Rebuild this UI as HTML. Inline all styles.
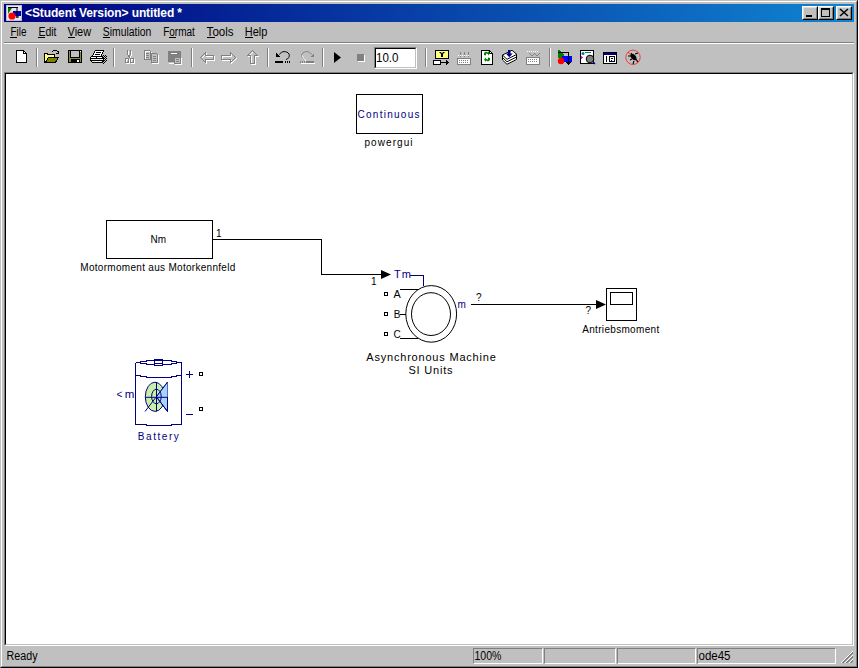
<!DOCTYPE html>
<html><head><meta charset="utf-8">
<style>
html,body{margin:0;padding:0;background:#fff;width:859px;height:668px;overflow:hidden}
*{box-sizing:border-box}
.a{position:absolute}
#win{position:absolute;left:0;top:0;width:858px;height:668px;background:#c0c0c0;
 border-top:1px solid #c0c0c0;border-left:1px solid #c0c0c0;border-right:1px solid #000;border-bottom:1px solid #000}
#win2{position:absolute;left:1px;top:1px;width:856px;height:666px;border-top:1px solid #fff;border-left:1px solid #fff;border-right:1px solid #808080;border-bottom:1px solid #808080}
#title{position:absolute;left:4px;top:4px;width:850px;height:18px;background:linear-gradient(to right,#000080,#1084d0)}
.cbtn{position:absolute;top:6px;width:16px;height:14px;background:#c0c0c0;border-top:1px solid #fff;border-left:1px solid #fff;border-right:1px solid #000;border-bottom:1px solid #000}
.cbtn i{position:absolute;left:0;top:0;width:14px;height:12px;border-right:1px solid #808080;border-bottom:1px solid #808080;border-top:1px solid #dfdfdf;border-left:1px solid #dfdfdf}
.sep{position:absolute;top:48px;width:2px;height:19px;border-left:1px solid #808080;border-right:1px solid #fff}
#canvas{position:absolute;left:4px;top:72px;width:850px;height:574px;border-top:1px solid #808080;border-left:1px solid #808080;border-right:1px solid #fff;border-bottom:1px solid #fff}
#canvas2{position:absolute;left:0;top:0;width:848px;height:572px;background:#fff;border-top:1px solid #000;border-left:1px solid #000;border-right:1px solid #c0c0c0;border-bottom:1px solid #c0c0c0}
.pane{position:absolute;top:648px;height:16px;border-top:1px solid #808080;border-left:1px solid #808080;border-right:1px solid #fff;border-bottom:1px solid #fff}
svg{position:absolute;left:0;top:0}
text{font-family:"Liberation Sans",sans-serif}
</style></head><body>
<div id="win"></div>
<div id="win2"></div>
<div id="title"></div>
<div class="cbtn" style="left:802px"><i></i></div>
<div class="cbtn" style="left:818px"><i></i></div>
<div class="cbtn" style="left:836px"><i></i></div>
<div class="a" style="left:806px;top:15px;width:6px;height:2px;background:#000"></div>
<div class="a" style="left:821px;top:8px;width:9px;height:9px;border:1px solid #000;border-top-width:2px"></div>
<div class="a" style="left:4px;top:42px;width:850px;height:1px;background:#808080"></div>
<div class="a" style="left:4px;top:43px;width:850px;height:1px;background:#fff"></div>
<div class="sep" style="left:36px"></div>
<div class="sep" style="left:113px"></div>
<div class="sep" style="left:191px"></div>
<div class="sep" style="left:267px"></div>
<div class="sep" style="left:322px"></div>
<div class="sep" style="left:425px"></div>
<div class="sep" style="left:549px"></div>
<div class="a" style="left:374px;top:47px;width:43px;height:22px;border-top:1px solid #808080;border-left:1px solid #808080;border-right:1px solid #fff;border-bottom:1px solid #fff">
 <div class="a" style="left:0;top:0;width:41px;height:20px;background:#fff;border-top:1px solid #000;border-left:1px solid #000;border-right:1px solid #c0c0c0;border-bottom:1px solid #c0c0c0"></div>
</div>
<div id="canvas"><div id="canvas2"></div></div>
<div class="pane" style="left:473px;width:70px"></div>
<div class="pane" style="left:544px;width:72px"></div>
<div class="pane" style="left:617px;width:79px"></div>
<div class="pane" style="left:697px;width:139px"></div>

<!-- UI text + icons -->
<svg id="ui" width="859" height="668">
 <!-- title -->
 <g>
  <rect x="6" y="5" width="16" height="16" fill="#c0c0c0"/>
  <rect x="7" y="6" width="14" height="14" fill="#e8e8f0"/>
  <path d="M8 7h10v1H8z" fill="#000"/>
  <path d="M8 8h4l-4 6z" fill="#008000"/>
  <rect x="13" y="11" width="8" height="5" fill="#0000c0"/>
  <circle cx="12" cy="16" r="3.6" fill="#ff0000"/>
  <path d="M17 8v10M16 17h3" stroke="#000" stroke-width="1" fill="none"/>
 </g>
 <text x="25" y="17" font-size="12" font-weight="bold" fill="#fff" textLength="157" lengthAdjust="spacing">&lt;Student Version&gt; untitled *</text>
 <path d="M840 9 L848 16 M848 9 L840 16" stroke="#000" stroke-width="1.5" fill="none"/>
 <!-- menu -->
 <g font-size="12" fill="#000">
  <text x="10.5" y="35.5" textLength="16" lengthAdjust="spacingAndGlyphs">File</text>
  <text x="38.5" y="35.5" textLength="18" lengthAdjust="spacingAndGlyphs">Edit</text>
  <text x="67.6" y="35.5" textLength="23.5" lengthAdjust="spacingAndGlyphs">View</text>
  <text x="102.8" y="35.5" textLength="48.5" lengthAdjust="spacingAndGlyphs">Simulation</text>
  <text x="163.2" y="35.5" textLength="31.7" lengthAdjust="spacingAndGlyphs">Format</text>
  <text x="206.6" y="35.5" textLength="27" lengthAdjust="spacingAndGlyphs">Tools</text>
  <text x="244.8" y="35.5" textLength="22.5" lengthAdjust="spacingAndGlyphs">Help</text>
 </g>
 <g fill="#000">
  <rect x="10" y="37" width="7" height="1"/>
  <rect x="38" y="37" width="7" height="1"/>
  <rect x="68" y="37" width="7" height="1"/>
  <rect x="103" y="37" width="7" height="1"/>
  <rect x="169" y="37" width="7" height="1"/>
  <rect x="207" y="37" width="8" height="1"/>
  <rect x="245" y="37" width="8" height="1"/>
 </g>
 <!-- status text -->
 <g font-size="12" fill="#000">
  <text x="6.5" y="660" textLength="31" lengthAdjust="spacingAndGlyphs">Ready</text>
  <text x="474.5" y="660" textLength="27" lengthAdjust="spacingAndGlyphs">100%</text>
  <text x="698.5" y="660" textLength="32" lengthAdjust="spacingAndGlyphs">ode45</text>
  <text x="376" y="62" textLength="22.5" lengthAdjust="spacingAndGlyphs">10.0</text>
 </g>
 <!-- size grip -->
 <g stroke-width="1" fill="none" shape-rendering="crispEdges" transform="translate(-1,0)">
  <path d="M841.5 663.5 L853.5 651.5" stroke="#fff"/>
  <path d="M842.5 663.5 L853.5 652.5 M843.5 663.5 L853.5 653.5" stroke="#808080"/>
  <path d="M845.5 663.5 L853.5 655.5" stroke="#fff"/>
  <path d="M846.5 663.5 L853.5 656.5 M847.5 663.5 L853.5 657.5" stroke="#808080"/>
  <path d="M849.5 663.5 L853.5 659.5" stroke="#fff"/>
  <path d="M850.5 663.5 L853.5 660.5 M851.5 663.5 L853.5 661.5" stroke="#808080"/>
 </g>

 <!-- TOOLBAR ICONS -->
 <g shape-rendering="crispEdges">
  <!-- new -->
  <path d="M16.5 50.5H23.5L26.5 53.5V62.5H16.5Z" fill="#fff" stroke="#000"/>
  <path d="M23.5 50.5V53.5H26.5" fill="none" stroke="#000"/>
  <!-- open -->
  <path d="M44.5 53.5H47.5V54.5H54.5V57.5H58.5L55.5 62.5H44.5Z" fill="#ffff80" stroke="#000"/>
  <path d="M48.5 57.5H58.5L55.5 62.5H45.5Z" fill="#808000" stroke="#000"/>
  <path d="M52 51h1v1h-1zM53 50h4v1h-4zM57 51h1v1h-1zM58 51h1v3h-3v-1h2z" fill="#000"/>
  <!-- save -->
  <rect x="68.5" y="50.5" width="13" height="12" fill="#8a8a48" stroke="#000"/>
  <rect x="70.5" y="50.5" width="9" height="7" fill="#c0c0c0" stroke="#000"/>
  <rect x="71" y="59" width="9" height="4" fill="#000"/>
  <rect x="77" y="60" width="2" height="2" fill="#fff"/>
  <rect x="80" y="51" width="1" height="1" fill="#fff"/>
  <!-- print -->
  <g><rect x="95" y="51" width="8" height="1" fill="#fff"/><rect x="95" y="52" width="7" height="1" fill="#fff"/><rect x="94" y="53" width="8" height="1" fill="#fff"/><rect x="94" y="54" width="7" height="1" fill="#fff"/><rect x="93" y="55" width="8" height="1" fill="#fff"/><rect x="95" y="50" width="9" height="1" fill="#000"/><rect x="94" y="51" width="1" height="1" fill="#000"/><rect x="94" y="52" width="1" height="1" fill="#000"/><rect x="93" y="53" width="1" height="1" fill="#000"/><rect x="93" y="54" width="1" height="1" fill="#000"/><rect x="92" y="55" width="1" height="1" fill="#000"/><rect x="103" y="51" width="1" height="1" fill="#000"/><rect x="102" y="52" width="1" height="1" fill="#000"/><rect x="102" y="53" width="1" height="1" fill="#000"/><rect x="101" y="54" width="1" height="1" fill="#000"/><rect x="101" y="55" width="1" height="1" fill="#000"/><rect x="96" y="52" width="5" height="1" fill="#000"/><rect x="95" y="54" width="5" height="1" fill="#000"/><rect x="91" y="56" width="12" height="1" fill="#000"/><rect x="90" y="57" width="1" height="1" fill="#000"/><rect x="91" y="57" width="5" height="1" fill="#fff"/><rect x="96" y="57" width="1" height="1" fill="#000"/><rect x="97" y="57" width="5" height="1" fill="#fff"/><rect x="102" y="57" width="1" height="1" fill="#000"/><rect x="90" y="58" width="14" height="1" fill="#000"/><rect x="90" y="59" width="1" height="1" fill="#000"/><rect x="91" y="59" width="12" height="1" fill="#f0f0e0"/><rect x="103" y="59" width="1" height="1" fill="#000"/><rect x="90" y="60" width="14" height="1" fill="#000"/><rect x="91" y="61" width="1" height="1" fill="#000"/><rect x="92" y="61" width="10" height="1" fill="#f0f0e0"/><rect x="102" y="61" width="1" height="1" fill="#000"/><rect x="92" y="62" width="11" height="1" fill="#000"/><rect x="103" y="55" width="1" height="1" fill="#000"/><rect x="105" y="55" width="1" height="1" fill="#000"/><rect x="104" y="56" width="1" height="1" fill="#000"/><rect x="106" y="56" width="1" height="1" fill="#000"/><rect x="103" y="57" width="1" height="1" fill="#000"/><rect x="105" y="57" width="1" height="1" fill="#000"/><rect x="104" y="58" width="1" height="1" fill="#000"/><rect x="106" y="58" width="1" height="1" fill="#000"/><rect x="105" y="59" width="1" height="1" fill="#000"/><rect x="104" y="60" width="1" height="1" fill="#000"/><rect x="106" y="60" width="1" height="1" fill="#000"/><rect x="103" y="61" width="1" height="1" fill="#000"/><rect x="105" y="61" width="1" height="1" fill="#000"/><rect x="104" y="62" width="1" height="1" fill="#000"/><rect x="103" y="63" width="1" height="1" fill="#000"/></g>
  <!-- cut (disabled) -->
  <g fill="none">
   <path d="M128.5 51v4l1.5 2.5 1.5 -2.5v-4M130.5 57v2" stroke="#fff"/>
   <path d="M127.5 50v4l1.5 2.5 1.5 -2.5v-4M129.5 56v2" stroke="#808080"/>
   <rect x="126.5" y="59.5" width="3" height="4" stroke="#fff"/>
   <rect x="131.5" y="59.5" width="3" height="4" stroke="#fff"/>
   <rect x="125.5" y="58.5" width="3" height="4" stroke="#808080"/>
   <rect x="130.5" y="58.5" width="3" height="4" stroke="#808080"/>
  </g>
  <!-- copy (disabled) -->
  <g fill="none">
   <path d="M145.5 51.5h5l1 1v7h-6z" stroke="#fff"/>
   <path d="M144.5 50.5h5l1 1v8h-6z" stroke="#808080"/>
   <path d="M146 53.5h3M146 55.5h3M146 57.5h3" stroke="#808080"/>
   <path d="M152.5 54.5h5l1 1v8h-6z" stroke="#fff"/>
   <path d="M151.5 53.5h5l1 1v8h-6z" stroke="#808080" fill="#c0c0c0"/>
   <path d="M153 56.5h3M153 58.5h3M153 60.5h3" stroke="#808080"/>
  </g>
  <!-- paste (disabled) -->
  <rect x="168" y="51" width="13" height="11" fill="#808080"/>
  <rect x="169" y="63" width="5" height="1" fill="#fff"/>
  <rect x="171" y="53" width="6" height="1" fill="#fff"/>
  <path d="M174.5 57.5h6v6h-6z" fill="#c0c0c0" stroke="#808080"/>
  <path d="M175 64.5h7M181.5 58v7" stroke="#fff" fill="none"/>
  <path d="M176 59.5h3M176 61.5h3" stroke="#808080"/>
  <!-- back (disabled) -->
  <g fill="none">
   <path d="M200.5 57.5L205.5 52.5V55.5H213.5V59.5H205.5V62.5Z" stroke="#fff" transform="translate(1,1)"/>
   <path d="M200.5 57.5L205.5 52.5V55.5H213.5V59.5H205.5V62.5Z" stroke="#808080"/>
   <!-- fwd -->
   <path d="M235.5 57.5L230.5 52.5V55.5H221.5V59.5H230.5V62.5Z" stroke="#fff" transform="translate(1,1)"/>
   <path d="M235.5 57.5L230.5 52.5V55.5H221.5V59.5H230.5V62.5Z" stroke="#808080"/>
   <!-- up -->
   <path d="M252.5 50.5L257.5 55.5H254.5V63.5H250.5V55.5H247.5Z" stroke="#fff" transform="translate(1,1)"/>
   <path d="M252.5 50.5L257.5 55.5H254.5V63.5H250.5V55.5H247.5Z" stroke="#808080"/>
  </g>
  <!-- undo -->
  <path d="M279.5 54.5C281 51 287 50.5 289 54 C290 56 288.5 59 286 59.5" stroke="#000" fill="none" shape-rendering="auto"/>
  <path d="M276 53V57H280Z" fill="#000"/>
  <rect x="275" y="61" width="8" height="2" fill="#000"/>
  <rect x="285" y="61" width="1" height="2" fill="#000"/>
  <rect x="287" y="61" width="1" height="2" fill="#000"/>
  <rect x="289" y="61" width="1" height="2" fill="#000"/>
  <!-- redo (disabled) -->
  <path d="M311.5 54.5C310 51 304 50.5 302 54 C301 56 302.5 59 305 59.5" stroke="#808080" fill="none" shape-rendering="auto"/>
  <path d="M302.5 55.5C303 58 304.5 60 306 60.5" stroke="#fff" fill="none" shape-rendering="auto"/>
  <path d="M314 53V57H310Z" fill="#808080"/>
  <rect x="306" y="61" width="8" height="2" fill="#808080"/>
  <rect x="300" y="61" width="1" height="2" fill="#808080"/>
  <rect x="302" y="61" width="1" height="2" fill="#808080"/>
  <rect x="304" y="61" width="1" height="2" fill="#808080"/>
  <rect x="301" y="63" width="14" height="1" fill="#fff"/>
  <!-- play -->
  <path d="M334 52L341 57.5L334 63Z" fill="#000" shape-rendering="auto"/>
  <!-- stop disabled -->
  <rect x="358" y="55" width="7" height="7" fill="#fff"/>
  <rect x="357" y="54" width="7" height="7" fill="#808080"/>
  <!-- library browser -->
  <rect x="435.5" y="50.5" width="13" height="8" fill="#ffff80" stroke="#000"/>
  <path d="M439 52h2l1 1.5l1-1.5h2l-2 2v3h-2v-3z" fill="#000" shape-rendering="auto"/>
  <rect x="433.5" y="60.5" width="7" height="4" fill="#fff" stroke="#000"/>
  <path d="M441 62.5h7" stroke="#000"/>
  <path d="M446 60v5l3-2.5z" fill="#000"/>
  <!-- grid disabled -->
  <g>
   <rect x="457.5" y="58.5" width="13" height="6" fill="#fff" stroke="#808080"/>
   <path d="M459 60.5h10M459 62.5h10" stroke="#808080" stroke-dasharray="1 1"/>
   <path d="M460.5 52v5M464.5 52v5M468.5 52v5" stroke="#808080"/>
   <path d="M458 55.5h12" stroke="#fff" stroke-dasharray="1 1"/>
  </g>
  <!-- green arrows doc -->
  <path d="M481.5 50.5H489.5L492.5 53.5V64.5H481.5Z" fill="#fff" stroke="#000"/>
  <path d="M489.5 50.5V53.5H492.5" fill="none" stroke="#000"/>
  <path d="M484 55v-2l2-1.5 2 1v-1.5l2 2.5-2 2v-1.5l-2-0.5v2zM490 58v2l-2 1.5-2-1v1.5l-2-2.5 2-2v1.5l2 0.5v-2z" fill="#008000" shape-rendering="auto"/>
  <!-- stack w/ arrow -->
  <g shape-rendering="auto">
   <path d="M502 55L512 50L517 54.5V60L507 64.5L502 60Z" fill="#fff"/>
   <path d="M502.5 55L512 50.3L517 54.5M502.5 55L507 59.3L516.5 54.5M502.5 57.5L507 61.8L516.5 57M502.5 60L507 64.3L516.5 59.5M502.5 55V60M516.5 54.5V59.5" fill="none" stroke="#000" stroke-width="1"/>
   <path d="M508 50h2.5v3.5h2.2l-3.45 3.8-3.45-3.8h2.2z" fill="#000080"/>
  </g>
  <!-- grid disabled 2 -->
  <g>
   <rect x="526.5" y="57.5" width="13" height="7" fill="#fff" stroke="#808080"/>
   <path d="M528 59.5h10M528 61.5h10" stroke="#808080" stroke-dasharray="1 1"/>
   <path d="M529 53l3 3 3-3M534 53l3 3 3-3" stroke="#808080" fill="none" shape-rendering="auto"/>
   <path d="M527 51.5h12" stroke="#fff" stroke-dasharray="1 1"/>
  </g>
  <!-- simulink model icon -->
  <path d="M558 50h1l5 5v3h-6z" fill="#008000"/>
  <rect x="562" y="56" width="10" height="6" fill="#0000ff"/>
  <circle cx="561" cy="61" r="3.2" fill="#ff0000" shape-rendering="auto"/>
  <path d="M558 52.5h11M568.5 53v10" stroke="#000"/>
  <path d="M566 62h5l-2.5 3z" fill="#000"/>
  <!-- model explorer -->
  <rect x="580.5" y="50.5" width="13" height="13" fill="#fff" stroke="#000"/>
  <circle cx="583" cy="53.5" r="1.5" fill="#008080" shape-rendering="auto"/>
  <path d="M581 56l2 1.5-2 1.5z" fill="#ff00ff"/>
  <rect x="585" y="52" width="6" height="1" fill="#008080"/>
  <circle cx="590" cy="59" r="3.8" fill="#808080" stroke="#000" shape-rendering="auto"/>
  <path d="M593 62l2 2" stroke="#000080" stroke-width="1.5" shape-rendering="auto"/>
  <!-- window -->
  <rect x="603.5" y="52.5" width="13" height="11" fill="#fff" stroke="#000"/>
  <rect x="604" y="53" width="12" height="2" fill="#000080"/>
  <path d="M606.5 56v6M609.5 56.5h5v5h-5zM611 58.5h2M611 60h1" stroke="#000" fill="none"/>
  <!-- debugger -->
  <g shape-rendering="auto">
   <circle cx="633" cy="57.3" r="7.2" fill="none" stroke="#f03030" stroke-width="0.9"/>
   <path d="M628 52l10 10.5" stroke="#f03030" stroke-width="0.9"/>
   <ellipse cx="633.5" cy="57" rx="2.3" ry="3.5" fill="#000" transform="rotate(-40 633.5 57)"/>
   <path d="M628 56h3M635 54l3-1M630 60l2-1M636 59l2 3M631 53l1 2M634 61l-1 3" stroke="#000" stroke-width="1.1"/>
  </g>
 </g>
</svg>

<!-- DIAGRAM -->
<svg id="dia" width="859" height="668">
 <g fill="none" stroke="#000" stroke-width="1" shape-rendering="crispEdges">
  <rect x="356.5" y="94.5" width="66" height="39"/>
  <rect x="106.5" y="220.5" width="106" height="38"/>
  <path d="M213 239.5H321.5V274.5H381"/>
  <rect x="606.5" y="288.5" width="30" height="32"/>
  <rect x="610.5" y="292.5" width="22" height="12"/>
  <path d="M471 304.5H597"/>
  <rect x="384.5" y="292.5" width="3" height="3"/>
  <rect x="384.5" y="312.5" width="3" height="3"/>
  <rect x="384.5" y="332.5" width="3" height="3"/>
  <path d="M400 289.5H418M400 314.5H406M400 338.5H418"/>
  <rect x="199.5" y="372.5" width="3" height="3"/>
  <rect x="199.5" y="407.5" width="3" height="3"/>
 </g>
 <path d="M381 270L391 274.5L381 279Z" fill="#000"/>
 <path d="M596 300L606 304.5L596 309Z" fill="#000"/>
 <g fill="none" stroke="#000" stroke-width="1">
  <ellipse cx="431.2" cy="313.9" rx="25.4" ry="28.3"/>
  <ellipse cx="431" cy="314.1" rx="19.5" ry="21.4"/>
 </g>
 <path d="M410 275.5H423.5V286" fill="none" stroke="#000080" stroke-width="1" shape-rendering="crispEdges"/>

 <!-- battery -->
 <g fill="none" stroke="#000080" stroke-width="1" shape-rendering="crispEdges">
  <path d="M135.5 362.5V424.5H146.5V425.5H171.5V424.5H181.5V362.5"/>
  <path d="M135.5 362.5H140.5V361.5H146.5V360.5H154.5V359.5H162.5V360.5H171.5V361.5H176.5V362.5H181.5"/>
  <path d="M135.5 362.5H140.5V363.5H146.5V364.5H154.5V365.5H162.5V364.5H171.5V363.5H176.5V362.5"/>
  <path d="M154.5 360.5H162.5V363.5H154.5Z"/>
  <path d="M135.5 375.5H140.5V376.5H146.5V377.5H171.5V376.5H176.5V375.5H181.5"/>
 </g>
 <g shape-rendering="auto">
  <ellipse cx="155" cy="396.8" rx="9.7" ry="14.6" fill="#c8f0a8" stroke="#000080"/>
  <path d="M167.5 382V411.5L156.5 397Z" fill="#a8d4ff" stroke="#000080"/>
  <path d="M156.5 397L167.5 382V397Z" fill="#a8d4ff"/>
  <path d="M145.5 397.3H167.5M156.5 382.2V411.5M145 411.5L167.5 382.2M156.5 397L167.5 411.5" stroke="#000080" fill="none"/>
  <ellipse cx="156.4" cy="396.5" rx="4.8" ry="7.3" fill="none" stroke="#000080"/>
 </g>
 <path d="M186 374.5H193M189.5 371V378M186 414.5H193" stroke="#000080" stroke-width="1" shape-rendering="crispEdges"/>

 <!-- texts -->
 <g font-size="10" stroke-width="0">
  <text x="357.5" y="118" fill="#000080" stroke="#000080" textLength="62" lengthAdjust="spacing">Continuous</text>
  <text x="364.5" y="146" fill="#000" stroke="#000" textLength="48" lengthAdjust="spacing">powergui</text>
  <text x="150.5" y="243" fill="#000" stroke="#000" textLength="15.5" lengthAdjust="spacing">Nm</text>
  <text x="80.3" y="271" fill="#000" stroke="#000" textLength="155" lengthAdjust="spacing">Motormoment aus Motorkennfeld</text>
  <text x="216" y="236.5" fill="#000" stroke="#000" font-size="10">1</text>
  <text x="371" y="284.5" fill="#000" stroke="#000" font-size="10">1</text>
  <text x="394" y="278.2" fill="#000080" stroke="#000080" font-size="11" textLength="17" lengthAdjust="spacing">Tm</text>
  <text x="393.6" y="298" fill="#000" stroke="#000" font-size="10" textLength="7.2" lengthAdjust="spacingAndGlyphs">A</text>
  <text x="393.8" y="318" fill="#000" stroke="#000" font-size="10">B</text>
  <text x="393.6" y="338" fill="#000" stroke="#000" font-size="10">C</text>
  <text x="457.5" y="308" fill="#000080" stroke="#000080" textLength="10" lengthAdjust="spacing">m</text>
  <text x="476" y="300.8" fill="#000" font-size="10">?</text>
  <text x="585.5" y="314.3" fill="#000" font-size="10">?</text>
  <text x="582.2" y="332.5" fill="#000" stroke="#000" textLength="77" lengthAdjust="spacing">Antriebsmoment</text>
  <text x="366.3" y="361" fill="#000" stroke="#000" font-size="11" textLength="129.5" lengthAdjust="spacing">Asynchronous Machine</text>
  <text x="408.5" y="374" fill="#000" stroke="#000" font-size="11" textLength="44" lengthAdjust="spacing">SI Units</text>
  <text x="116.6" y="397.5" fill="#000080">&lt;</text><text x="124.8" y="397.5" fill="#000080" textLength="9.6" lengthAdjust="spacingAndGlyphs">m</text>
  <text x="137.8" y="440.3" fill="#000080" stroke="#000080" textLength="41" lengthAdjust="spacing">Battery</text>
 </g>
</svg>
</body></html>
